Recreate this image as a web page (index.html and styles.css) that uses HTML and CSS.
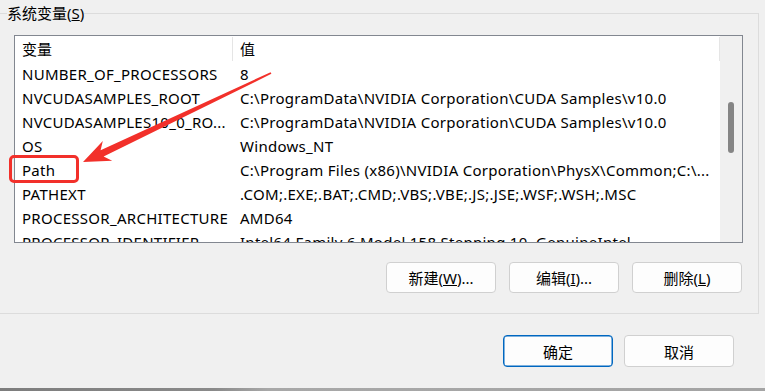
FILE: index.html
```html
<!DOCTYPE html>
<html lang="zh-CN">
<head>
    <meta charset="utf-8">
    <link rel="stylesheet" href="styles.css">
    <title>环境变量</title>
</head>
<body>
    <div class="dialog">
        <fieldset class="group">
            <legend>系统变量(<u>S</u>)</legend>
            <div class="listbox">
                <div class="list">
                    <div class="row head">
                        <div class="name">变量</div>
                        <div class="value">值</div>
                    </div>
                    <div class="row">
                        <div class="name">NUMBER_OF_PROCESSORS</div>
                        <div class="value">8</div>
                    </div>
                    <div class="row">
                        <div class="name">NVCUDASAMPLES_ROOT</div>
                        <div class="value">C:\ProgramData\NVIDIA Corporation\CUDA Samples\v10.0</div>
                    </div>
                    <div class="row">
                        <div class="name">NVCUDASAMPLES10_0_RO...</div>
                        <div class="value">C:\ProgramData\NVIDIA Corporation\CUDA Samples\v10.0</div>
                    </div>
                    <div class="row">
                        <div class="name">OS</div>
                        <div class="value">Windows_NT</div>
                    </div>
                    <div class="row">
                        <div class="name">Path</div>
                        <div class="value">C:\Program Files (x86)\NVIDIA Corporation\PhysX\Common;C:\...</div>
                    </div>
                    <div class="row">
                        <div class="name">PATHEXT</div>
                        <div class="value">.COM;.EXE;.BAT;.CMD;.VBS;.VBE;.JS;.JSE;.WSF;.WSH;.MSC</div>
                    </div>
                    <div class="row">
                        <div class="name">PROCESSOR_ARCHITECTURE</div>
                        <div class="value">AMD64</div>
                    </div>
                    <div class="row">
                        <div class="name">PROCESSOR_IDENTIFIER</div>
                        <div class="value">Intel64 Family 6 Model 158 Stepping 10, GenuineIntel</div>
                    </div>
                </div>
                <div class="scrollbar"><div class="thumb"></div></div>
            </div>
            <div class="actions">
                <button class="btn">新建(<u>W</u>)...</button>
                <button class="btn">编辑(<u>I</u>)...</button>
                <button class="btn">删除(<u>L</u>)</button>
            </div>
        </fieldset>
        <div class="footer">
            <button class="btn ok">确定</button>
            <button class="btn">取消</button>
        </div>
        <div class="edge"></div>
    </div>

    <!-- annotation drawn over the screenshot -->
    <div class="mark-box"></div>
    <svg class="arrow" width="765" height="391" viewBox="0 0 765 391">
        <polygon fill="#f2302a" points="83,162 112.2,160.7 103.6,156.6 271.4,73.8 270.6,72.2 100.6,150.2 102.8,140.9"/>
    </svg>
</body>
</html>
```

FILE: styles.css
```css
* {
    box-sizing: border-box;
}
body {
    margin: 0;
    background-color: #f0f0f0;
    font-family: "Noto Sans", "Noto Sans CJK SC", sans-serif;
    font-size: 15px;
    color: #000;
    overflow: hidden;
}
.dialog {
    width: 765px;
    height: 391px;
    display: flex;
    flex-direction: column;
}
.group {
    margin: 3px 6px 0 0;
    padding: 0 15px 20px 7px;
    border: 1px solid #dcdcdc;
    border-left: none;
    min-width: 0;
}
.group legend {
    padding: 0;
    line-height: 20px;
}
.listbox {
    margin: 12px 0 0 7px;
    height: 208px;
    border: 1px solid #828790;
    background-color: #fff;
    display: flex;
}
.list {
    flex: 1;
    overflow: hidden;
}
.row {
    display: flex;
    height: 24px;
    line-height: 25px;
    white-space: nowrap;
    letter-spacing: 0.28px;
}
.row.head {
    height: 26px;
    letter-spacing: 0;
}
.name {
    width: 218px;
    padding-left: 7px;
    overflow: hidden;
}
.value {
    flex: 1;
    padding-left: 7px;
    overflow: hidden;
}
.head .name,
.head .value {
    border-right: 1px solid #e5e5e5;
    margin: 1px 0;
    line-height: 24px;
}
.scrollbar {
    width: 22px;
    background-color: #f0f0f0;
    padding: 66px 0 0 8px;
}
.thumb {
    width: 6px;
    height: 51px;
    border-radius: 3px;
    background-color: #858585;
}
.actions {
    display: flex;
    justify-content: flex-end;
    gap: 13px;
    margin-top: 19px;
    padding-right: 1px;
}
.btn {
    width: 110px;
    height: 31px;
    padding: 0;
    border: 1px solid #d0d0d0;
    border-radius: 4px;
    background-color: #fdfdfd;
    font-family: inherit;
    font-size: 15px;
    color: #000;
}
.footer {
    display: flex;
    justify-content: flex-end;
    gap: 11px;
    margin-top: 21px;
    padding-right: 31px;
}
.footer .btn {
    height: 32px;
}
.btn.ok {
    border: 1px solid #0067c0;
    box-shadow: inset 0 0 0 0.5px #0067c0;
}
.edge {
    margin-top: auto;
    height: 3px;
    background: linear-gradient(to right, #7d7d7d, #8a8a8a 28%, #a8a8a8 35%, #a4a4a4);
}
.mark-box {
    position: absolute;
    left: 9px;
    top: 155px;
    width: 70px;
    height: 28px;
    border: 3px solid #f2302a;
    border-radius: 5px;
}
.arrow {
    position: absolute;
    left: 0;
    top: 0;
    pointer-events: none;
}
```
